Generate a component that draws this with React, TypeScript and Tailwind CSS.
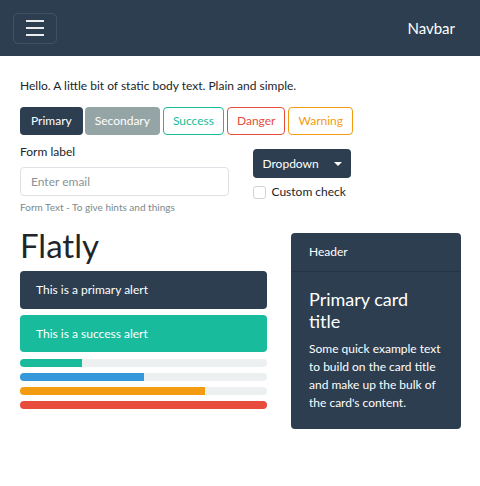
import React from 'react';

const bars = [
  { w: 25, color: 'bg-[#18bc9c]' },
  { w: 50, color: 'bg-[#3498db]' },
  { w: 75, color: 'bg-[#f39c12]' },
  { w: 100, color: 'bg-[#e74c3c]' },
];

export default function App() {
  return (
    <div className="w-[480px] h-[486px] bg-white text-[#212529] font-['Lato','Liberation_Sans',sans-serif] text-[12px]">
      <nav className="h-[56px] bg-[#2c3e50] flex items-center justify-between pl-[13px] pr-[25px]">
        <button className="w-[44px] h-[31px] rounded-[5px] border border-white/10 flex flex-col items-center justify-center gap-[5px]">
          <span className="block w-[18px] h-[2px] bg-white/90" />
          <span className="block w-[18px] h-[2px] bg-white/90" />
          <span className="block w-[18px] h-[2px] bg-white/90" />
        </button>
        <span className="text-white text-[15px]">Navbar</span>
      </nav>

      <div className="pl-[20px] pr-[19px] pt-[21px]">
        <p className="leading-[18px]">Hello. A little bit of static body text. Plain and simple.</p>

        <div className="flex gap-[2px] mt-[12px]">
          <button className="h-[28px] px-[11px] rounded-[4px] bg-[#2c3e50] text-white">Primary</button>
          <button className="h-[28px] px-[10px] rounded-[4px] bg-[#95a5a6] text-white">Secondary</button>
          <button className="ml-[1px] h-[28px] px-[9px] rounded-[4px] border border-[#18bc9c] text-[#18bc9c]">Success</button>
          <button className="ml-[1px] h-[28px] px-[9px] rounded-[4px] border border-[#e74c3c] text-[#e74c3c]">Danger</button>
          <button className="ml-[1px] h-[28px] px-[9px] rounded-[4px] border border-[#f39c12] text-[#f39c12]">Warning</button>
        </div>

        <div className="grid grid-cols-2 gap-x-[24px] mt-[8px]">
          <div>
            <label className="block leading-[18px]">Form label</label>
            <input
              className="mt-[6px] w-full h-[29px] px-[10px] rounded-[4px] border border-[#dee2e6] text-[12px] placeholder:text-[#8a9496] outline-none"
              placeholder="Enter email"
            />
            <div className="mt-[4px] text-[10px] text-[#7b8a8b]">Form Text - To give hints and things</div>
          </div>
          <div className="pt-[6px]">
            <button className="h-[29px] w-[98px] pl-[10px] pr-[9px] rounded-[4px] bg-[#2c3e50] text-white flex items-center justify-between">
              <span>Dropdown</span>
              <span className="w-0 h-0 border-l-[4px] border-r-[4px] border-t-[4px] border-l-transparent border-r-transparent border-t-white" />
            </button>
            <label className="flex items-center gap-[6px] mt-[5px]">
              <span className="w-[13px] h-[13px] rounded-[3px] border border-[#ced4da] bg-white" />
              <span>Custom check</span>
            </label>
          </div>
        </div>

        <div className="grid grid-cols-[247px_170px] gap-x-[24px] mt-[9px]">
          <div>
            <h1 className="text-[33px] leading-[42px] font-normal">Flatly</h1>
            <div className="mt-[5px] h-[38px] rounded-[4px] bg-[#2c3e50] text-white flex items-center px-[16px]">
              This is a primary alert
            </div>
            <div className="mt-[6px] h-[37px] rounded-[4px] bg-[#18bc9c] text-white flex items-center px-[16px]">
              This is a success alert
            </div>
            <div className="mt-[7px] flex flex-col gap-[6px]">
              {bars.map((b) => (
                <div key={b.w} className="h-[8px] rounded-[4px] bg-[#ecf0f1] overflow-hidden">
                  <div className={`h-full ${b.color}`} style={{ width: `${b.w}%` }} />
                </div>
              ))}
            </div>
          </div>

          <div className="mt-[9px] self-start rounded-[4px] bg-[#2c3e50] text-white">
            <div className="h-[39px] flex items-center px-[18px] border-b border-black/15">Header</div>
            <div className="px-[18px] pt-[16px] pb-[17px]">
              <h4 className="text-[18px] leading-[22px]">Primary card title</h4>
              <p className="mt-[8px] leading-[18px]">
                Some quick example text to build on the card title and make up the bulk of the card's content.
              </p>
            </div>
          </div>
        </div>
      </div>
    </div>
  );
}
